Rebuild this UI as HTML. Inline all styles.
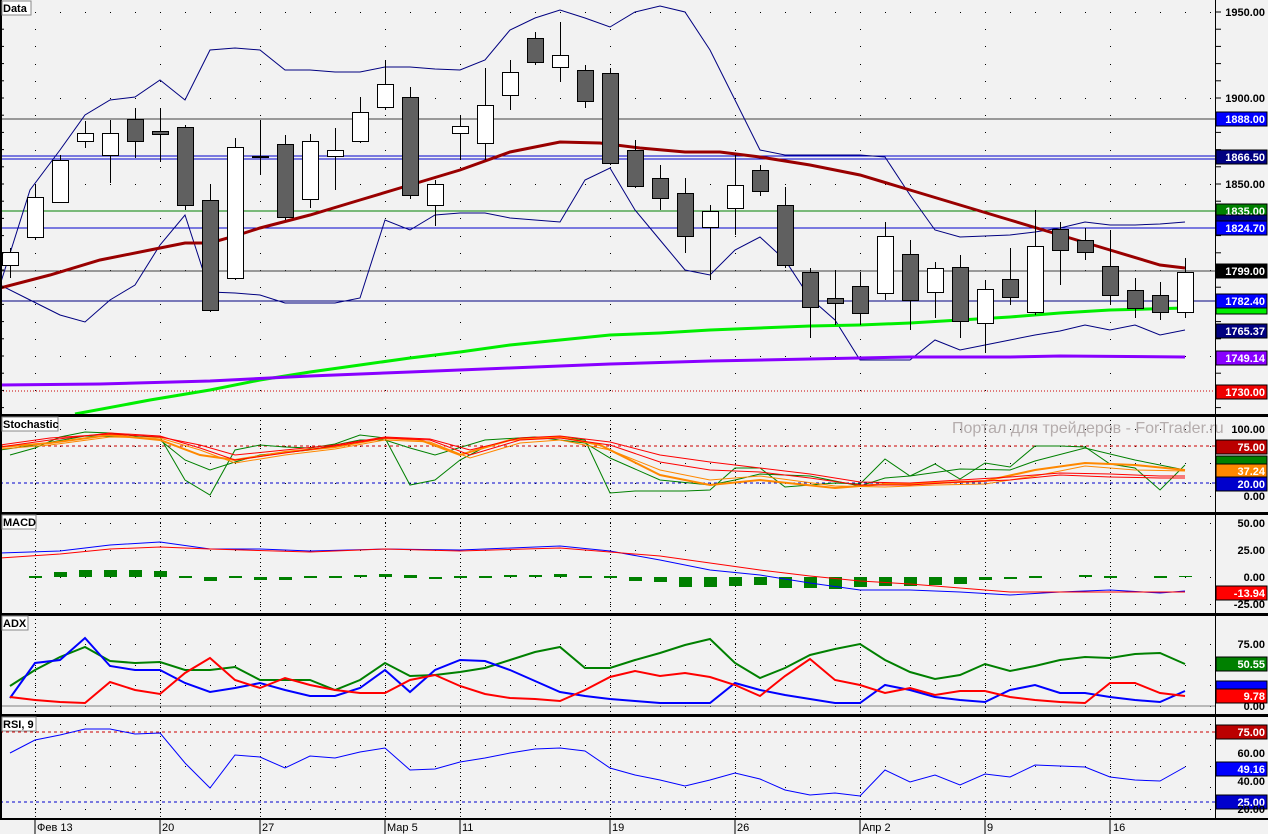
<!DOCTYPE html>
<html><head><meta charset="utf-8">
<style>
html,body{margin:0;padding:0;background:#f2f2f2;}
svg{display:block;font-family:"Liberation Sans",sans-serif;}
.ax{font-size:11px;font-weight:bold;fill:#000;text-anchor:end;}
.bx{font-size:11px;font-weight:bold;fill:#fff;text-anchor:end;}
.dt{font-size:11px;fill:#000;}
.lb{font-size:11px;font-weight:bold;fill:#000;}
</style></head><body>
<svg id="s" width="1268" height="834" viewBox="0 0 1268 834" xmlns="http://www.w3.org/2000/svg">
<rect width="1268" height="834" fill="#f2f2f2"/>
<g id="grid"></g>
<line x1="0" y1="119" x2="1215" y2="119" stroke="#404040" stroke-width="1"/>
<line x1="0" y1="156" x2="1215" y2="156" stroke="#0000cc" stroke-width="1"/>
<line x1="0" y1="159" x2="1215" y2="159" stroke="#0000cc" stroke-width="1"/>
<line x1="0" y1="211" x2="1215" y2="211" stroke="#008000" stroke-width="1"/>
<line x1="0" y1="228" x2="1215" y2="228" stroke="#0000cc" stroke-width="1"/>
<line x1="0" y1="271" x2="1215" y2="271" stroke="#404040" stroke-width="1"/>
<line x1="0" y1="301" x2="1215" y2="301" stroke="#000080" stroke-width="1"/>
<line x1="0" y1="391" x2="1215" y2="391" stroke="#cc0000" stroke-width="1" stroke-dasharray="1,2"/>
<g id="lines"></g>
<g id="candles"></g>
<line x1="0" y1="446" x2="1215" y2="446" stroke="#cc0000" stroke-dasharray="3,3"/>
<line x1="0" y1="483" x2="1215" y2="483" stroke="#0000cc" stroke-dasharray="3,3"/>
<line x1="0" y1="732" x2="1215" y2="732" stroke="#cc0000" stroke-dasharray="3,3"/>
<line x1="0" y1="802" x2="1215" y2="802" stroke="#0000cc" stroke-dasharray="3,3"/>
<line x1="0" y1="706" x2="1215" y2="706" stroke="#808080"/>
<g id="ind"></g>
<text x="952" y="433" font-size="16" fill="#b4acac">Портал для трейдеров - ForTrader.ru</text>
<g fill="#000">
<rect x="0" y="414" width="1268" height="3"/>
<rect x="0" y="512" width="1268" height="3"/>
<rect x="0" y="613" width="1268" height="3"/>
<rect x="0" y="714" width="1268" height="3"/>
<rect x="0" y="818" width="1268" height="2"/>
<rect x="0" y="0" width="2" height="820"/>
<rect x="1215" y="0" width="1" height="820"/>
</g>
<g id="ticks"></g>
<g>
<rect x="2" y="1" width="29" height="14" fill="#fff" stroke="#888"/><text class="lb" x="3" y="12" font-size="12">Data</text>
<rect x="2" y="417" width="56" height="14" fill="#fff" stroke="#888"/><text class="lb" x="3" y="428" font-size="12">Stochastic</text>
<rect x="2" y="515" width="34" height="14" fill="#fff" stroke="#888"/><text class="lb" x="3" y="526" font-size="12">MACD</text>
<rect x="2" y="616" width="26" height="14" fill="#fff" stroke="#888"/><text class="lb" x="3" y="627" font-size="12">ADX</text>
<rect x="2" y="717" width="34" height="14" fill="#fff" stroke="#888"/><text class="lb" x="3" y="728" font-size="12">RSI, 9</text>
</g>
<text class="ax" x="1265" y="16">1950.00</text>
<text class="ax" x="1265" y="102">1900.00</text>
<text class="ax" x="1265" y="188">1850.00</text>
<g id="boxes"></g>
<text class="ax" x="1265" y="433">100.00</text>
<text class="ax" x="1265" y="500">0.00</text>
<text class="ax" x="1265" y="527">50.00</text>
<text class="ax" x="1265" y="554">25.00</text>
<text class="ax" x="1265" y="581">0.00</text>
<text class="ax" x="1265" y="608">-25.00</text>
<text class="ax" x="1265" y="648">75.00</text>
<text class="ax" x="1265" y="710">0.00</text>
<text class="ax" x="1265" y="757">60.00</text>
<text class="ax" x="1265" y="785">40.00</text>
<text class="ax" x="1265" y="813">20.00</text>
<g class="dt">
<text x="37" y="831">Фев 13</text><text x="162" y="831">20</text><text x="262" y="831">27</text>
<text x="387" y="831">Мар 5</text><text x="462" y="831">11</text><text x="612" y="831">19</text>
<text x="737" y="831">26</text><text x="862" y="831">Апр 2</text><text x="987" y="831">9</text><text x="1113" y="831">16</text>
</g>
</svg>
<script>
var NS="http://www.w3.org/2000/svg";
function el(p,t,a){var e=document.createElementNS(NS,t);for(var k in a)e.setAttribute(k,a[k]);document.getElementById(p).appendChild(e);return e;}
function pl(p,pts,c,w,extra){var a={points:pts,fill:"none",stroke:c,"stroke-width":w};if(extra)for(var k in extra)a[k]=extra[k];el(p,"polyline",a);}
function xs(arr){var s=[];for(var i=0;i<arr.length;i++)s.push((10+25*i)+","+arr[i]);return s.join(" ");}
var panels=[[12,98,184,270,356],[429,446,463,483,496],[523,550,577,604],[644,665,685,706],[724,745,766,787,809]];
panels.forEach(function(rows){rows.forEach(function(y){for(var x=35;x<1215;x+=25)el("grid","rect",{x:x,y:y,width:1,height:1,fill:"#000"});});});
var wk=[35,160,260,385,460,610,735,860,985,1110];
var ranges=[[417,512],[515,613],[616,714],[717,818]];
wk.forEach(function(x){
 for(var y=12;y<414;y+=17.2)el("grid","rect",{x:x,y:Math.round(y),width:1,height:1,fill:"#000"});
 ranges.forEach(function(r){for(var y=r[0]+3;y<r[1];y+=4)el("grid","rect",{x:x,y:y,width:1,height:1,fill:"#000"});});
 el("ticks","line",{x1:x,y1:819,x2:x,y2:834,stroke:"#000"});});
for(var y=12;y<414;y+=17.2){el("ticks","line",{x1:1215,y1:y,x2:1221,y2:y,stroke:"#000"});el("ticks","line",{x1:0,y1:y,x2:4,y2:y,stroke:"#000"});}
pl("lines","0,285 30,190 60,150 85,115 110,100 135,97 160,80 185,100 210,50 235,48 260,50 285,70 310,70 335,72 360,72 385,67 410,67 435,69 460,70 485,60 510,30 535,18 560,10 585,18 610,27 635,12 660,6 685,12 710,50 735,100 760,150 785,155 810,155 835,155 860,155 885,157 910,195 935,230 960,237 985,236 1010,235 1035,232 1060,228 1085,222 1110,225 1135,225 1160,224 1185,222","#000080",1);
pl("lines","0,285 30,300 60,315 85,322 110,300 135,285 160,245 185,215 210,292 235,293 260,295 285,303 310,303 335,303 360,298 385,220 410,230 435,215 460,213 485,213 510,218 535,220 560,222 585,180 610,168 635,210 660,240 685,270 710,275 735,250 760,237 785,260 810,298 835,320 860,360 885,360 910,360 935,340 960,350 985,345 1010,340 1035,335 1060,331 1085,325 1110,330 1135,325 1160,335 1185,330","#000080",1);
pl("lines","0,288 50,275 100,260 150,250 185,243 210,243 235,236 260,228 310,215 360,200 410,185 460,170 510,152 560,142 600,143 640,148 685,152 720,152 760,157 810,165 860,175 910,190 960,205 1010,220 1060,235 1110,250 1160,265 1185,268","#990000",3);
pl("lines","75,414 150,400 210,390 260,380 310,372 360,365 410,358 460,352 510,345 560,340 610,335 660,333 710,330 760,328 810,326 860,325 910,323 960,320 1010,317 1060,313 1110,310 1185,308","#00ee00",3);
pl("lines","0,385 100,384 210,381 310,376 410,372 510,368 610,364 710,361 810,359 910,357 1010,357 1060,356 1185,357","#8800ff",3);
var C=[[252,265,248,278,0],[197,237,185,240,0],[160,202,155,202,0],[133,141,121,148,0],[133,155,120,183,0],[119,141,108,158,1],[131,134,108,162,1],[127,205,125,210,1],[200,310,185,312,1],[147,278,138,280,0],[156,157,120,175,1],[144,217,135,220,1],[141,199,134,208,0],[150,156,128,190,0],[112,141,97,143,0],[84,107,60,110,0],[97,195,87,199,1],[184,205,180,226,0],[126,133,116,160,0],[105,143,68,160,0],[72,95,60,110,0],[38,62,32,65,1],[55,67,22,82,0],[70,101,65,108,1],[73,163,68,165,1],[150,186,140,188,1],[178,198,165,210,1],[193,236,178,253,1],[211,227,205,280,0],[185,208,155,235,0],[170,191,165,196,1],[205,265,187,268,1],[272,307,268,338,1],[298,303,270,325,1],[286,313,272,325,1],[236,293,222,300,0],[254,300,240,330,1],[268,292,262,318,0],[267,321,255,338,1],[289,323,280,353,0],[279,297,248,305,1],[246,312,210,315,0],[229,250,222,285,1],[240,252,228,260,1],[266,295,230,305,1],[290,308,278,318,1],[295,312,282,320,1],[272,312,258,318,0]];
C.forEach(function(c,i){var x=10+25*i;el("candles","line",{x1:x+.5,y1:c[2],x2:x+.5,y2:c[3],stroke:"#000","stroke-width":1});
 el("candles","rect",{x:x-7.5,y:c[0]+.5,width:16,height:Math.max(1,c[1]-c[0]),fill:c[4]?"#606060":"#fff",stroke:"#000","stroke-width":1});});
pl("ind",xs([455,448,437,432,433,436,437,480,495,450,445,447,448,444,435,438,485,480,460,447,440,438,437,440,493,491,491,491,490,468,468,487,485,483,484,459,476,464,479,463,467,446,446,447,464,468,490,465]),"#008000",1);
pl("ind","0,450 35,445 85,436 135,437 160,440 185,460 210,470 235,462 260,455 310,450 360,440 385,440 410,448 435,455 485,440 535,437 585,443 610,458 660,480 710,485 735,480 760,474 810,476 860,486 885,478 910,476 960,469 1010,470 1035,461 1085,448 1135,460 1185,470","#008000",1);
pl("ind","0,447 50,443 110,435 160,440 200,455 235,460 285,452 335,447 385,438 420,440 460,455 510,440 560,437 600,445 660,475 710,485 760,480 835,488 885,484 935,483 985,481 1035,470 1085,463 1135,465 1185,470","#ff8800",2);
pl("ind","0,449 50,445 110,437 160,438 200,450 235,463 285,455 335,449 385,440 430,442 470,458 520,443 560,440 610,450 660,470 710,480 760,476 835,486 885,487 935,485 985,484 1035,476 1085,466 1135,470 1185,471","#ff8800",1);
pl("ind","0,447 50,440 110,433 160,436 200,448 235,460 285,453 335,446 385,438 430,440 470,455 520,440 560,438 610,445 660,462 710,470 760,472 810,478 860,485 910,485 960,482 1010,480 1060,475 1110,477 1160,478 1185,478","#ff0000",1);
pl("ind","0,445 50,438 110,434 160,437 200,445 235,455 285,450 335,445 385,437 430,439 470,450 520,438 560,436 610,442 660,455 710,462 760,468 810,474 860,482 910,483 960,480 1010,477 1060,473 1110,474 1160,476 1185,476","#ff0000",1);
var H={35:[576,578],60:[572,577],85:[570,577],110:[570,577],135:[570,577],160:[571,577],185:[576,578],210:[577,581],235:[576,578],260:[577,580],285:[577,580],310:[576,578],335:[576,578],360:[575,577],385:[574,577],410:[575,578],435:[577,579],460:[576,578],485:[576,578],510:[575,577],535:[575,577],560:[574,577],585:[576,578],610:[576,578],635:[577,581],660:[577,582],685:[577,587],710:[577,587],735:[577,586],760:[577,585],785:[577,588],810:[577,588],835:[577,589],860:[577,587],885:[577,586],910:[577,586],935:[577,585],960:[577,584],985:[577,580],1010:[577,579],1035:[576,578],1085:[575,577],1110:[576,578],1160:[576,578],1185:[576,577]};
for(var k in H){var h=H[k];el("ind","rect",{x:k-6,y:h[0],width:13,height:h[1]-h[0],fill:"#008000"});}
pl("ind","0,553 60,551 110,545 160,542 210,549 260,549 310,551 385,549 460,550 560,546 610,551 660,560 710,570 760,575 810,583 860,590 910,590 960,592 1010,595 1060,592 1110,590 1160,593 1185,591","#0000ff",1);
pl("ind","0,558 60,554 110,549 160,547 210,549 310,552 385,549 460,551 560,548 610,552 660,556 710,563 760,570 810,576 860,581 910,584 960,588 1010,592 1060,592 1110,592 1185,592","#ff0000",1);
pl("ind",xs([686,670,657,647,661,663,662,670,670,667,680,680,680,690,680,663,676,675,672,668,660,652,647,668,668,660,653,645,639,663,678,668,655,649,644,660,672,679,675,664,671,666,660,657,658,654,653,664]),"#008000",2);
pl("ind",xs([698,663,660,638,666,670,670,683,692,688,683,690,696,696,688,670,692,670,660,661,670,681,692,696,699,701,703,703,703,683,690,695,699,703,703,685,690,697,700,702,690,685,693,693,697,700,702,691]),"#0000ff",2);
pl("ind",xs([697,700,702,703,682,690,694,673,658,680,688,678,685,690,693,693,680,675,686,694,698,699,701,690,677,671,676,673,677,685,696,676,659,680,685,693,688,695,691,691,697,700,702,703,683,683,693,696]),"#ff0000",2);
pl("ind",xs([753,740,735,729,729,734,733,763,788,755,757,768,756,758,752,748,770,769,762,758,753,749,748,751,768,775,780,786,780,773,779,790,795,793,796,770,782,775,785,774,777,765,766,767,777,780,781,767]),"#0000ff",1);
var B=[[119,"#0000ff","1888.00"],[157,"#000080","1866.50"],[211,"#008000","1835.00"],[222,"#000080",""],[228,"#0000ff","1824.70"],[271,"#000000","1799.00"],[307,"#00ee00",""],[301,"#0000ff","1782.40"],[331,"#000080","1765.37"],[358,"#8800ff","1749.14"],[392,"#ee0000","1730.00"],
[447,"#bb0000","75.00"],[463,"#008000",""],[471,"#ff8800","37.24"],[484,"#0000cc","20.00"],[593,"#ff0000","-13.94"],[664,"#008000","50.55"],[688,"#0000ff",""],[696,"#ff0000","9.78"],[732,"#bb0000","75.00"],[769,"#0000ff","49.16"],[802,"#0000cc","25.00"]];
B.forEach(function(b){el("boxes","rect",{x:1216,y:b[0]-7,width:51,height:14,fill:b[1],stroke:"#000","stroke-width":1});
 if(b[2]){var t=el("boxes","text",{class:"bx",x:1265,y:b[0]+4});t.textContent=b[2];}});
</script>
</body></html>
